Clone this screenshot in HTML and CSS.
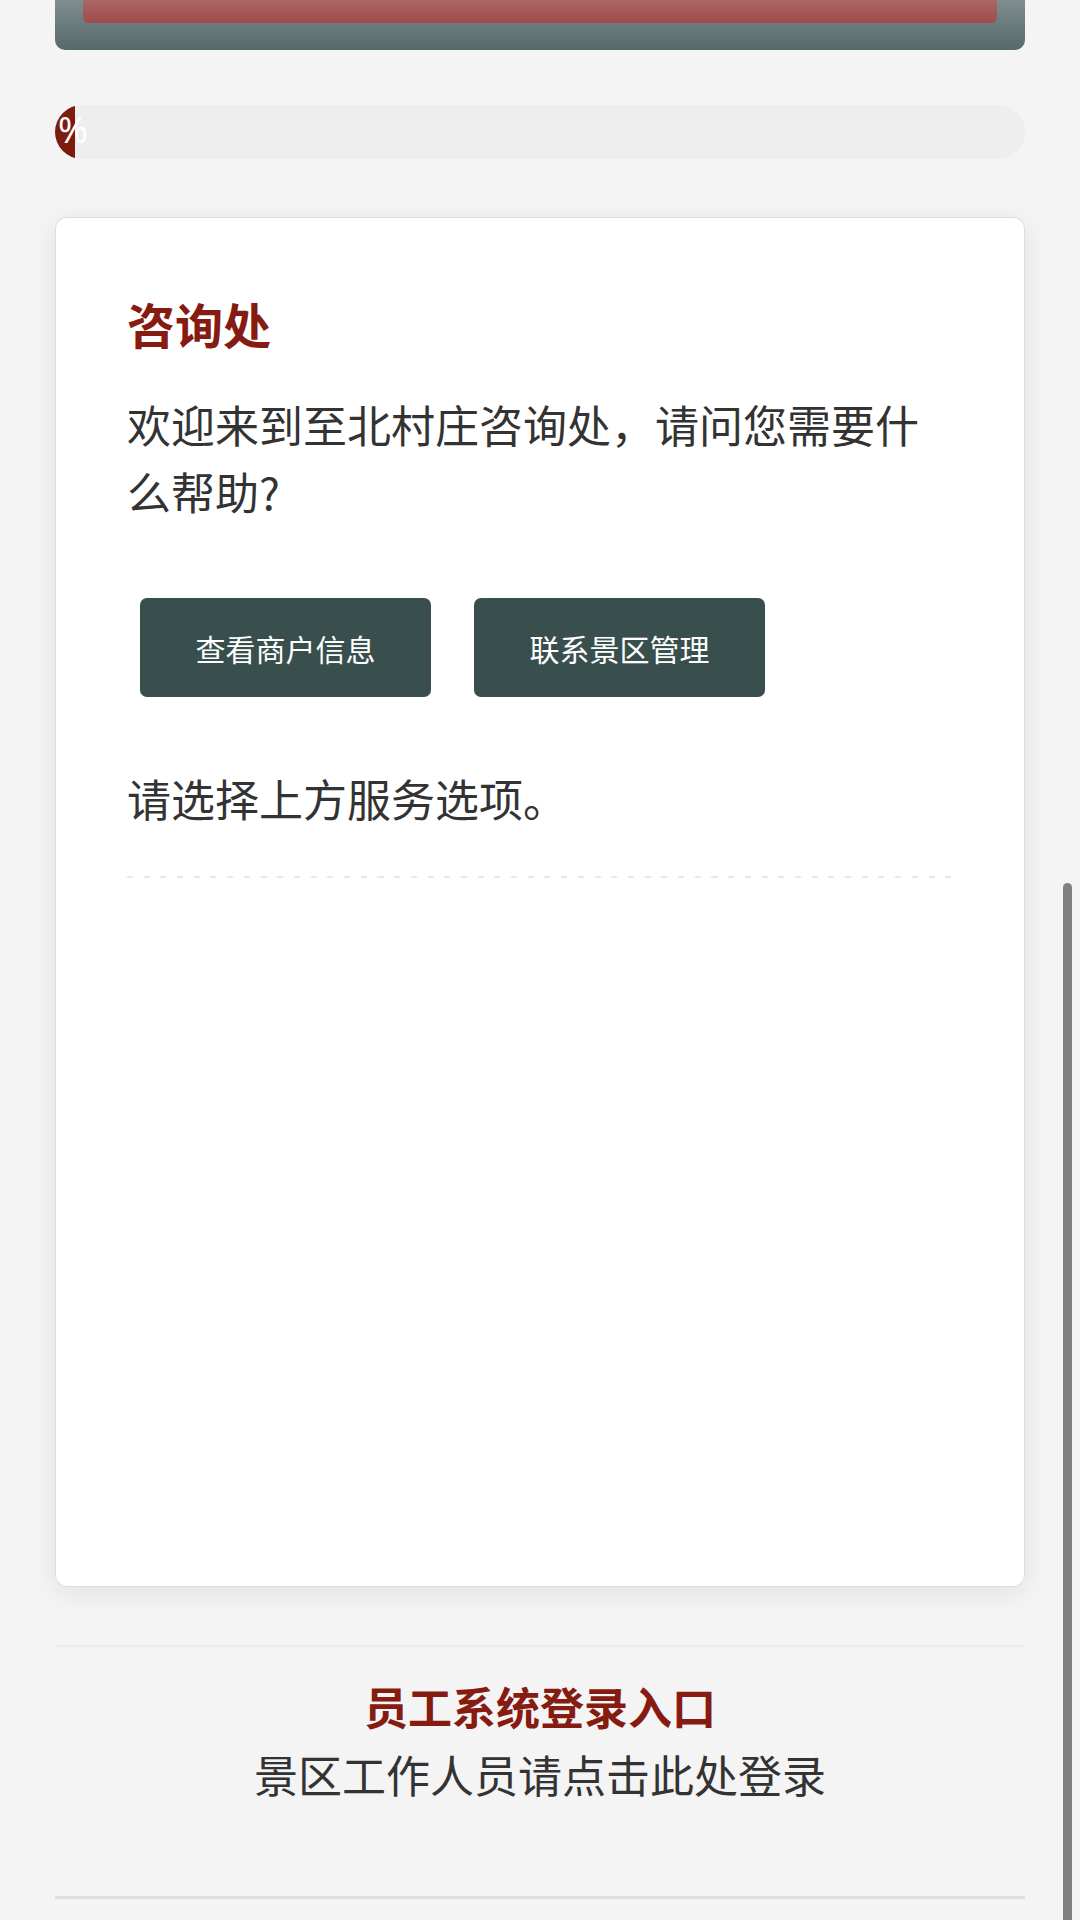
FILE: index.html
```html
<!DOCTYPE html>
<html lang="zh-CN">
<head>
<meta charset="utf-8">
<title>咨询处</title>
<link rel="stylesheet" href="styles.css">
</head>
<body>
<div class="page">
  <div class="banner"><div class="banner-bar"></div></div>

  <div class="progress">
    <div class="progress-fill" style="width: 20px;"><span class="progress-text">%</span></div>
  </div>

  <section class="card">
    <h2 class="card-title">咨询处</h2>
    <p class="card-text">欢迎来到至北村庄咨询处，请问您需要什么帮助?</p>
    <div class="actions">
      <button class="btn">查看商户信息</button>
      <button class="btn">联系景区管理</button>
    </div>
    <p class="card-hint">请选择上方服务选项。</p>
    <div class="divider"></div>
    <div class="response"></div>
  </section>

  <footer class="footer">
    <div class="footer-title">员工系统登录入口</div>
    <div class="footer-sub">景区工作人员请点击此处登录</div>
  </footer>
</div>
<div class="scrollbar"></div>
</body>
</html>
```

FILE: styles.css
```css
html, body {
  margin: 0;
  padding: 0;
  background: #f4f4f4;
}
body {
  font-family: "Noto Sans CJK SC", "Noto Sans", sans-serif;
  color: #333333;
}
.page {
  padding: 0 55px;
  display: flex;
  flex-direction: column;
}
.banner {
  height: 50px;
  box-sizing: border-box;
  padding: 0 28px 27px;
  background: linear-gradient(to bottom, #7f8f8f, #566868);
  border-radius: 0 0 10px 10px;
}
.banner-bar {
  height: 23px;
  background: linear-gradient(to bottom, #ac6666, #a04a4a);
  border-radius: 0 0 6px 6px;
}
.progress {
  margin-top: 55px;
  height: 54px;
  border-radius: 27px;
  background: #eeeeee;
  overflow: hidden;
}
.progress-fill {
  height: 100%;
  background: #7e1b0f;
  position: relative;
  overflow: visible;
  display: flex;
  align-items: center;
}
.progress-text {
  color: #ffffff;
  font-family: "Noto Sans", sans-serif;
  font-size: 36px;
  line-height: 1;
  padding-left: 3px;
  margin-top: -4px;
  white-space: nowrap;
}
.card {
  margin-top: 58px;
  background: #ffffff;
  border: 1px solid #dddddd;
  border-radius: 12px;
  box-shadow: 0 6px 30px rgba(0, 0, 0, 0.08);
  padding: 76px 71px 0;
  height: 1370px;
  box-sizing: border-box;
}
.card-title {
  margin: 0;
  font-size: 48px;
  line-height: 58px;
  font-weight: 700;
  color: #861b12;
}
.card-text {
  margin: 39px 0 0;
  font-size: 44px;
  line-height: 67px;
  color: #333333;
}
.actions {
  display: flex;
  gap: 43px;
  margin: 73px 0 0 13px;
}
.btn {
  width: 291px;
  height: 99px;
  border: none;
  border-radius: 7px;
  background: #384f4e;
  color: #ffffff;
  font-family: "Noto Sans CJK SC", sans-serif;
  font-size: 30px;
  padding: 0;
}
.card-hint {
  margin: 68px 0 0;
  font-size: 44px;
  line-height: 67px;
  color: #333333;
}
.divider {
  margin-top: 44px;
  height: 2px;
  background: repeating-linear-gradient(to right, #e8e8e8 0 6px, transparent 6px 16.7px);
}
.response {
  min-height: 200px;
}
.footer {
  margin-top: 58px;
  border-top: 2px solid #ebebeb;
  border-bottom: 3px solid #dedede;
  padding: 30px 0 89px;
  text-align: center;
}
.footer-title {
  font-size: 44px;
  line-height: 58px;
  font-weight: 700;
  color: #861b12;
}
.footer-sub {
  margin-top: 6px;
  font-size: 44px;
  line-height: 66px;
  color: #333333;
}
.scrollbar {
  position: fixed;
  right: 8px;
  top: 883px;
  bottom: 0;
  width: 9px;
  background: #808080;
  border-radius: 5px 5px 0 0;
}
```
